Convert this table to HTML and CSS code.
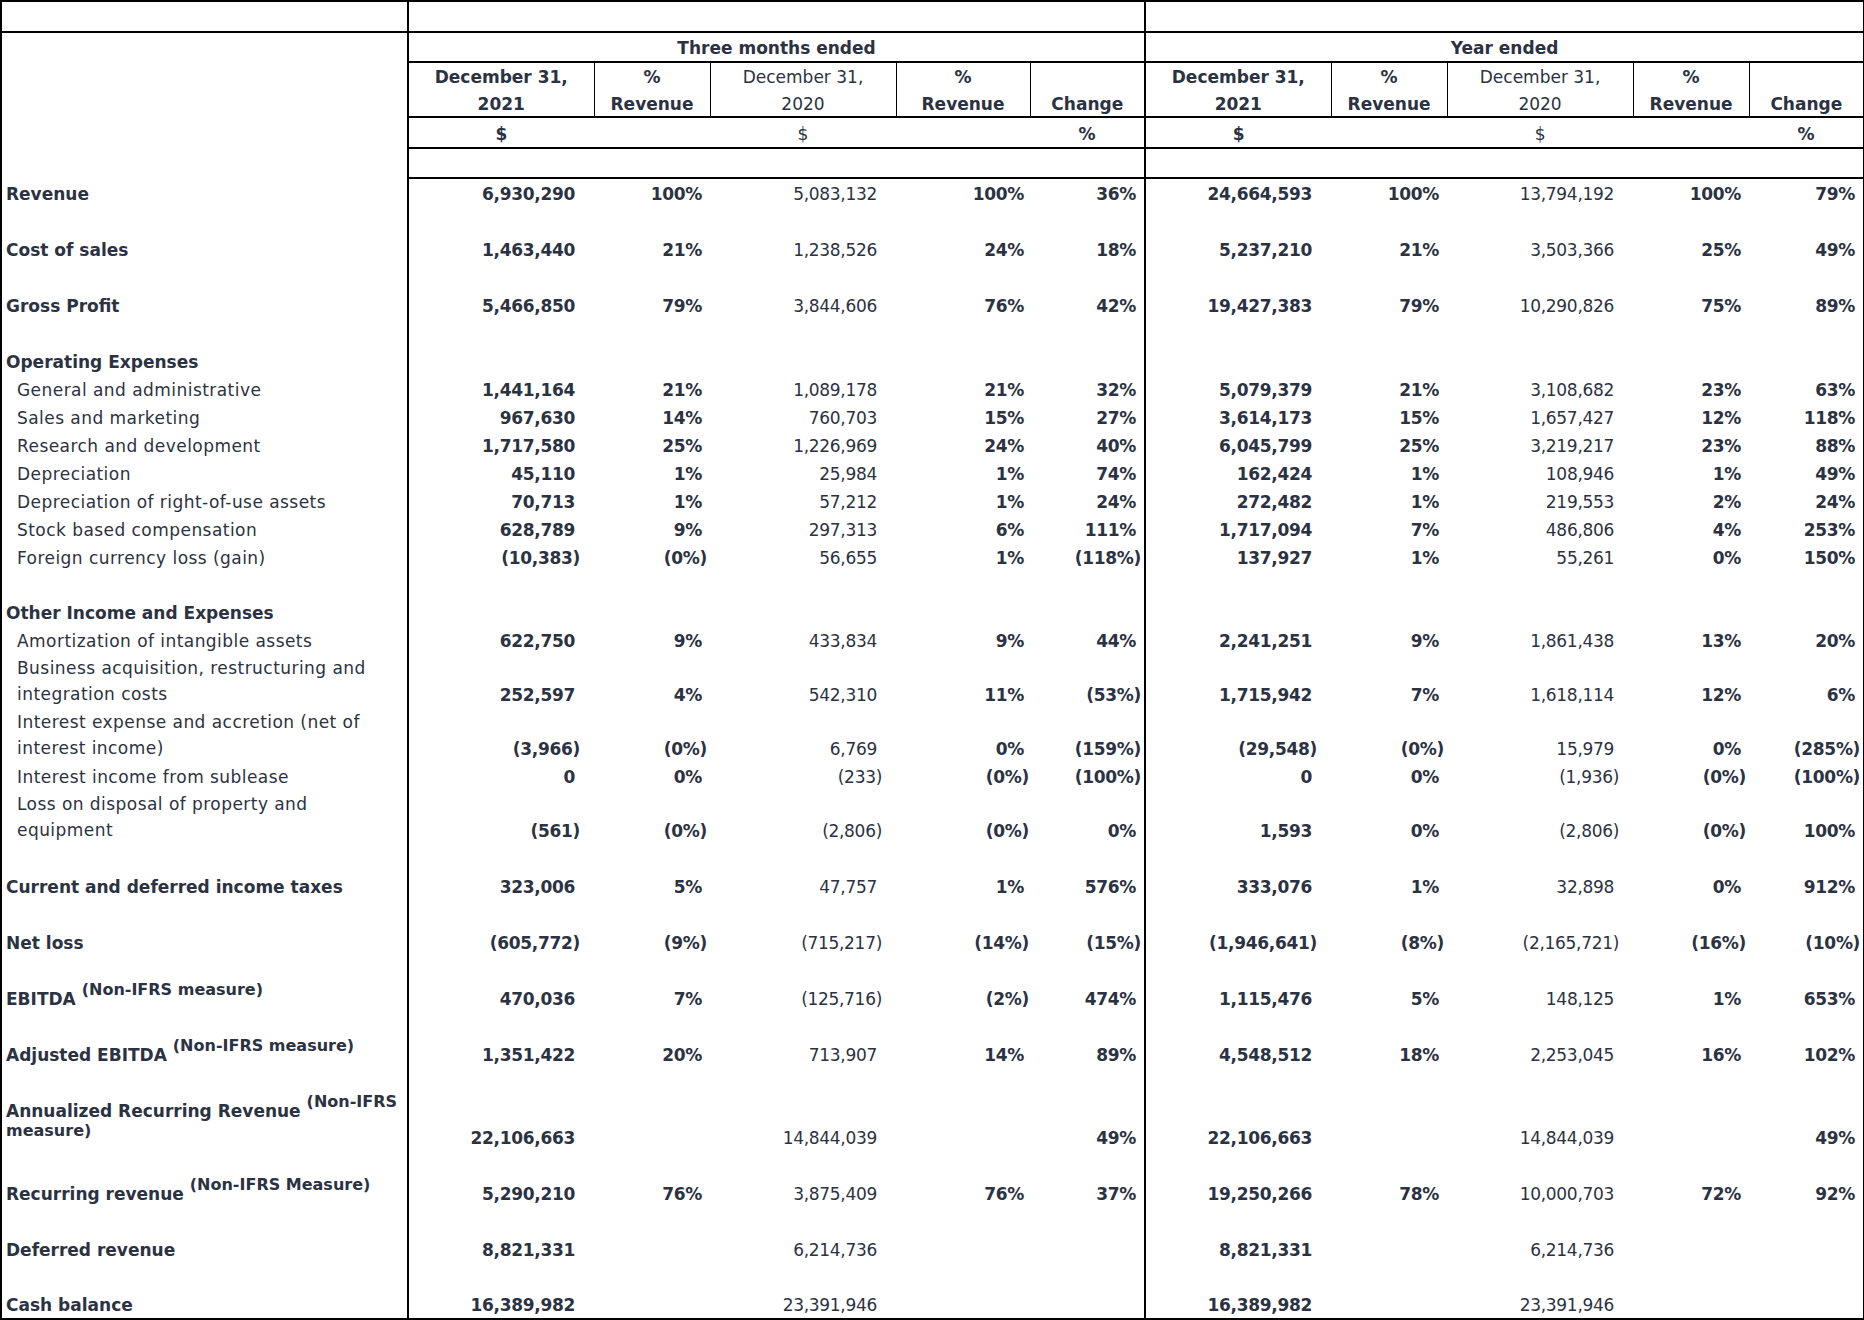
FILE: index.html
```html
<!DOCTYPE html>
<html lang="en">
<head>
<meta charset="utf-8">
<title>Financial highlights</title>
<link rel="stylesheet" href="styles.css">
</head>
<body>
<table class="fin">
  <colgroup>
    <col class="c-label">
    <col class="c-amt">
    <col class="c-pct">
    <col class="c-amt">
    <col class="c-pct2">
    <col class="c-chg c-end">
    <col class="c-amt">
    <col class="c-pct">
    <col class="c-amt">
    <col class="c-pct">
    <col class="c-chg">
  </colgroup>
  <thead>
    <tr class="r1"><td class="lh"></td><td colspan="5"></td><td colspan="5"></td></tr>
    <tr class="r2"><td rowspan="4" class="lh2"></td><td colspan="5" class="gh">Three months ended</td><td colspan="5" class="gh">Year ended</td></tr>
    <tr class="r3">
      <td class="b"><div class="hd">December 31,<br>2021</div></td>
      <td class="b"><div class="hd">%<br>Revenue</div></td>
      <td><div class="hd">December 31,<br>2020</div></td>
      <td class="b"><div class="hd">%<br>Revenue</div></td>
      <td class="b"><div class="hd one">Change</div></td>
      <td class="b"><div class="hd">December 31,<br>2021</div></td>
      <td class="b"><div class="hd">%<br>Revenue</div></td>
      <td><div class="hd">December 31,<br>2020</div></td>
      <td class="b"><div class="hd">%<br>Revenue</div></td>
      <td class="b"><div class="hd one">Change</div></td>
    </tr>
    <tr class="r4">
      <td class="b">$</td><td></td><td>$</td><td></td><td class="b">%</td>
      <td class="b">$</td><td></td><td>$</td><td></td><td class="b">%</td>
    </tr>
    <tr class="r5"><td colspan="5"></td><td colspan="5"></td></tr>
  </thead>
  <tbody>
    <tr><td class="l">Revenue</td><td>6,930,290</td><td>100%</td><td>5,083,132</td><td>100%</td><td>36%</td><td>24,664,593</td><td>100%</td><td>13,794,192</td><td>100%</td><td>79%</td></tr>
    <tr class="g"><td class="l"></td><td colspan="5"></td><td colspan="5"></td></tr>
    <tr><td class="l">Cost of sales</td><td>1,463,440</td><td>21%</td><td>1,238,526</td><td>24%</td><td>18%</td><td>5,237,210</td><td>21%</td><td>3,503,366</td><td>25%</td><td>49%</td></tr>
    <tr class="g"><td class="l"></td><td colspan="5"></td><td colspan="5"></td></tr>
    <tr><td class="l">Gross Profit</td><td>5,466,850</td><td>79%</td><td>3,844,606</td><td>76%</td><td>42%</td><td>19,427,383</td><td>79%</td><td>10,290,826</td><td>75%</td><td>89%</td></tr>
    <tr class="g"><td class="l"></td><td colspan="5"></td><td colspan="5"></td></tr>
    <tr><td class="l">Operating Expenses</td><td colspan="5"></td><td colspan="5"></td></tr>
    <tr><td class="l i">General and administrative</td><td>1,441,164</td><td>21%</td><td>1,089,178</td><td>21%</td><td>32%</td><td>5,079,379</td><td>21%</td><td>3,108,682</td><td>23%</td><td>63%</td></tr>
    <tr><td class="l i">Sales and marketing</td><td>967,630</td><td>14%</td><td>760,703</td><td>15%</td><td>27%</td><td>3,614,173</td><td>15%</td><td>1,657,427</td><td>12%</td><td>118%</td></tr>
    <tr><td class="l i">Research and development</td><td>1,717,580</td><td>25%</td><td>1,226,969</td><td>24%</td><td>40%</td><td>6,045,799</td><td>25%</td><td>3,219,217</td><td>23%</td><td>88%</td></tr>
    <tr><td class="l i">Depreciation</td><td>45,110</td><td>1%</td><td>25,984</td><td>1%</td><td>74%</td><td>162,424</td><td>1%</td><td>108,946</td><td>1%</td><td>49%</td></tr>
    <tr><td class="l i">Depreciation of right-of-use assets</td><td>70,713</td><td>1%</td><td>57,212</td><td>1%</td><td>24%</td><td>272,482</td><td>1%</td><td>219,553</td><td>2%</td><td>24%</td></tr>
    <tr><td class="l i">Stock based compensation</td><td>628,789</td><td>9%</td><td>297,313</td><td>6%</td><td>111%</td><td>1,717,094</td><td>7%</td><td>486,806</td><td>4%</td><td>253%</td></tr>
    <tr><td class="l i">Foreign currency loss (gain)</td><td><span class="n">(10,383)</span></td><td><span class="n">(0%)</span></td><td>56,655</td><td>1%</td><td><span class="n">(118%)</span></td><td>137,927</td><td>1%</td><td>55,261</td><td>0%</td><td>150%</td></tr>
    <tr class="g"><td class="l"></td><td colspan="5"></td><td colspan="5"></td></tr>
    <tr><td class="l">Other Income and Expenses</td><td colspan="5"></td><td colspan="5"></td></tr>
    <tr><td class="l i">Amortization of intangible assets</td><td>622,750</td><td>9%</td><td>433,834</td><td>9%</td><td>44%</td><td>2,241,251</td><td>9%</td><td>1,861,438</td><td>13%</td><td>20%</td></tr>
    <tr><td class="l i w">Business acquisition, restructuring and<br>integration costs</td><td>252,597</td><td>4%</td><td>542,310</td><td>11%</td><td><span class="n">(53%)</span></td><td>1,715,942</td><td>7%</td><td>1,618,114</td><td>12%</td><td>6%</td></tr>
    <tr><td class="l i w">Interest expense and accretion (net of<br>interest income)</td><td><span class="n">(3,966)</span></td><td><span class="n">(0%)</span></td><td>6,769</td><td>0%</td><td><span class="n">(159%)</span></td><td><span class="n">(29,548)</span></td><td><span class="n">(0%)</span></td><td>15,979</td><td>0%</td><td><span class="n">(285%)</span></td></tr>
    <tr><td class="l i">Interest income from sublease</td><td>0</td><td>0%</td><td><span class="n">(233)</span></td><td><span class="n">(0%)</span></td><td><span class="n">(100%)</span></td><td>0</td><td>0%</td><td><span class="n">(1,936)</span></td><td><span class="n">(0%)</span></td><td><span class="n">(100%)</span></td></tr>
    <tr><td class="l i w">Loss on disposal of property and<br>equipment</td><td><span class="n">(561)</span></td><td><span class="n">(0%)</span></td><td><span class="n">(2,806)</span></td><td><span class="n">(0%)</span></td><td>0%</td><td>1,593</td><td>0%</td><td><span class="n">(2,806)</span></td><td><span class="n">(0%)</span></td><td>100%</td></tr>
    <tr class="g"><td class="l"></td><td colspan="5"></td><td colspan="5"></td></tr>
    <tr><td class="l">Current and deferred income taxes</td><td>323,006</td><td>5%</td><td>47,757</td><td>1%</td><td>576%</td><td>333,076</td><td>1%</td><td>32,898</td><td>0%</td><td>912%</td></tr>
    <tr class="g"><td class="l"></td><td colspan="5"></td><td colspan="5"></td></tr>
    <tr><td class="l">Net loss</td><td><span class="n">(605,772)</span></td><td><span class="n">(9%)</span></td><td><span class="n">(715,217)</span></td><td><span class="n">(14%)</span></td><td><span class="n">(15%)</span></td><td><span class="n">(1,946,641)</span></td><td><span class="n">(8%)</span></td><td><span class="n">(2,165,721)</span></td><td><span class="n">(16%)</span></td><td><span class="n">(10%)</span></td></tr>
    <tr class="g"><td class="l"></td><td colspan="5"></td><td colspan="5"></td></tr>
    <tr><td class="l">EBITDA <span class="sup">(Non-IFRS measure)</span></td><td>470,036</td><td>7%</td><td><span class="n">(125,716)</span></td><td><span class="n">(2%)</span></td><td>474%</td><td>1,115,476</td><td>5%</td><td>148,125</td><td>1%</td><td>653%</td></tr>
    <tr class="g"><td class="l"></td><td colspan="5"></td><td colspan="5"></td></tr>
    <tr><td class="l">Adjusted EBITDA <span class="sup">(Non-IFRS measure)</span></td><td>1,351,422</td><td>20%</td><td>713,907</td><td>14%</td><td>89%</td><td>4,548,512</td><td>18%</td><td>2,253,045</td><td>16%</td><td>102%</td></tr>
    <tr class="g"><td class="l"></td><td colspan="5"></td><td colspan="5"></td></tr>
    <tr class="tall"><td class="l top">Annualized Recurring Revenue <span class="sup">(Non-IFRS</span><br><span class="sup sup2">measure)</span></td><td>22,106,663</td><td></td><td>14,844,039</td><td></td><td>49%</td><td>22,106,663</td><td></td><td>14,844,039</td><td></td><td>49%</td></tr>
    <tr class="g"><td class="l"></td><td colspan="5"></td><td colspan="5"></td></tr>
    <tr><td class="l">Recurring revenue <span class="sup">(Non-IFRS Measure)</span></td><td>5,290,210</td><td>76%</td><td>3,875,409</td><td>76%</td><td>37%</td><td>19,250,266</td><td>78%</td><td>10,000,703</td><td>72%</td><td>92%</td></tr>
    <tr class="g"><td class="l"></td><td colspan="5"></td><td colspan="5"></td></tr>
    <tr><td class="l">Deferred revenue</td><td>8,821,331</td><td></td><td>6,214,736</td><td></td><td></td><td>8,821,331</td><td></td><td>6,214,736</td><td></td><td></td></tr>
    <tr class="g"><td class="l"></td><td colspan="5"></td><td colspan="5"></td></tr>
    <tr><td class="l">Cash balance</td><td>16,389,982</td><td></td><td>23,391,946</td><td></td><td></td><td>16,389,982</td><td></td><td>23,391,946</td><td></td><td></td></tr>
  </tbody>
</table>
</body>
</html>
```

FILE: styles.css
```css
html, body {
  margin: 0;
  padding: 0;
  background: #ffffff;
}

body {
  font-family: "DejaVu Sans", "Liberation Sans", sans-serif;
  font-size: 17px;
  color: #2b3242;
}

.fin {
  border-collapse: collapse;
  table-layout: fixed;
  width: 1862px;
  border: 2px solid #000;
}

.c-label { width: 407px; }
.c-amt { width: 186px; }
.c-pct { width: 116px; }
.c-pct2 { width: 134px; }
.c-chg { width: 115px; }

.fin col.c-label,
.fin col.c-end {
  border-right: 2px solid #000;
}

.fin td {
  padding: 0;
  line-height: 27.75px;
  white-space: nowrap;
}

/* header */
.fin thead td {
  text-align: center;
  vertical-align: top;
  font-weight: normal;
}

.fin thead .b { font-weight: bold; }

.r1 td {
  height: 29px;
  border-bottom: 2px solid #000;
}

.r2 td.gh {
  height: 26px;
  padding-top: 2px;
  line-height: 26px;
  font-weight: bold;
  border-bottom: 2px solid #000;
}

.r3 td {
  height: 53px;
  border: 1px solid #000;
  border-bottom-width: 2px;
}

.r3 td:nth-child(5) { border-right-width: 2px; }

.hd {
  height: 52px;
  padding-top: 1px;
  line-height: 26.7px;
}

.hd.one {
  height: 25.3px;
  padding-top: 27.7px;
}

.r4 td {
  height: 26px;
  padding-top: 3px;
  line-height: 26px;
  border-bottom: 2px solid #000;
}

.r5 td {
  height: 28px;
  border-bottom: 2px solid #000;
}

.fin thead td.lh2 { border-bottom: none; }

/* body */
.fin tbody td {
  text-align: right;
  vertical-align: bottom;
  font-weight: bold;
  letter-spacing: -0.3px;
  padding-top: 3.4px;
  line-height: 24.55px;
}

.fin tbody td:nth-child(2),
.fin tbody td:nth-child(4),
.fin tbody td:nth-child(7),
.fin tbody td:nth-child(9) {
  padding-right: 19px;
}

.fin tbody td:nth-child(3),
.fin tbody td:nth-child(6),
.fin tbody td:nth-child(8),
.fin tbody td:nth-child(10),
.fin tbody td:nth-child(11) {
  padding-right: 8px;
}

.fin tbody td:nth-child(5) { padding-right: 6px; }

.fin tbody td:nth-child(4),
.fin tbody td:nth-child(9) {
  font-weight: normal;
}

.fin tbody td.l {
  text-align: left;
  padding-left: 4px;
  padding-right: 0;
  letter-spacing: 0;
}

.fin tbody td.l.i {
  padding-left: 15px;
  font-weight: normal;
  letter-spacing: 0.45px;
}

.fin tbody td.l.w {
  padding-top: 1px;
  line-height: 26.5px;
}

.fin tbody td.top {
  vertical-align: top;
  line-height: 25.8px;
}

.fin tbody tr.g td {
  padding-top: 0;
  height: 27.95px;
}

.n { margin-right: -5px; }

.sup {
  font-size: 16px;
  vertical-align: 10px;
  line-height: 0;
}

.sup2 { vertical-align: 7px; }
```
